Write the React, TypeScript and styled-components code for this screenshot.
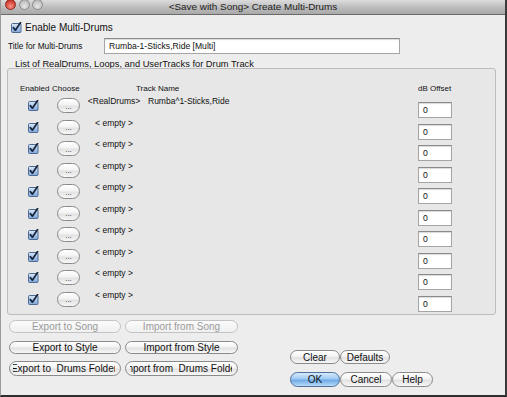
import React from "react";
import styled, { createGlobalStyle, css } from "styled-components";

const GlobalStyle = createGlobalStyle`
  html, body {
    margin: 0;
    padding: 0;
    background: #ececec;
  }
  body {
    font-family: "Liberation Sans", Arial, sans-serif;
    color: #111;
  }
`;

const Window = styled.div`
  width: 507px;
  height: 397px;
  box-sizing: border-box;
  border-left: 1px solid #9a9a9a;
  border-right: 2px solid #3a3a3a;
  border-bottom: 2px solid #2e2e2e;
  background: #ededed;
  display: flex;
  flex-direction: column;
  overflow: hidden;
`;

const TitleBar = styled.div`
  height: 14px;
  flex-shrink: 0;
  display: grid;
  grid-template-columns: 60px 1fr 60px;
  align-items: center;
  background: linear-gradient(#dcdcdc, #b9b9b9 60%, #a9a9a9);
  border-bottom: 1px solid #6a6a6a;
  overflow: hidden;
`;

const Lights = styled.div`
  display: flex;
  gap: 2.5px;
  padding-left: 4px;
  margin-top: -6px;
`;

const Light = styled.div<{ $red?: boolean }>`
  width: 11px;
  height: 11px;
  border-radius: 50%;
  box-sizing: border-box;
  border: 1px solid ${(p) => (p.$red ? "#8d2a22" : "#8c8c8c")};
  background: ${(p) =>
    p.$red
      ? "radial-gradient(circle at 50% 70%, #f7948a, #d8473a 60%, #a72a1d)"
      : "radial-gradient(circle at 50% 70%, #e6e6e6, #c4c4c4 60%, #a3a3a3)"};
`;

const Title = styled.div`
  text-align: center;
  font-size: 9.9px;
  color: #1a1a1a;
  line-height: 14px;
`;

const Body = styled.div`
  flex: 1;
  display: flex;
  flex-direction: column;
`;

const EnableRow = styled.label`
  display: flex;
  align-items: center;
  gap: 3px;
  padding: 6px 0 0 10px;
  height: 12px;
  font-size: 10px;
`;

const TitleRow = styled.div`
  display: flex;
  align-items: center;
  margin-top: 5px;
  padding-left: 7px;
  height: 16px;
`;

const SmallLabel = styled.span`
  font-size: 8.3px;
  width: 96px;
`;

const TextInput = styled.div<{ $w: number }>`
  width: ${(p) => p.$w}px;
  height: 16px;
  box-sizing: border-box;
  background: #fff;
  border: 1px solid #a5a5a5;
  border-top-color: #8a8a8a;
  box-shadow: inset 0 1px 1px rgba(0, 0, 0, 0.15);
  font-size: 8.6px;
  line-height: 14px;
  padding-left: 4px;
  white-space: nowrap;
  overflow: hidden;
`;

const SectionLabel = styled.div`
  font-size: 9.3px;
  padding: 4px 0 0 14px;
  height: 12px;
  line-height: 12px;
`;

const Group = styled.div`
  margin: -2px 9px 0 6px;
  height: 247px;
  box-sizing: border-box;
  border: 1px solid #bcbcbc;
  border-radius: 3px;
  background: #e7e7e7;
  padding: 12px 0 0 12px;
`;

const Grid = styled.div`
  display: grid;
  grid-template-columns: 27px 28px 58px 265px 34px;
  column-gap: 5px;
  grid-template-rows: 14px;
  grid-auto-rows: 21.5px;
  align-items: center;
`;

const HeadCell = styled.div<{ $indent?: number; $span?: boolean }>`
  font-size: 8px;
  white-space: nowrap;
  padding-left: ${(p) => p.$indent ?? 0}px;
  ${(p) =>
    p.$span &&
    css`
      grid-column: span 2;
    `}
`;

const Centered = styled.div`
  display: flex;
  justify-content: center;
`;

const RightCell = styled.div`
  display: flex;
  justify-content: flex-end;
`;

const SourceLabel = styled.div`
  font-size: 8.5px;
  text-align: center;
  align-self: start;
  padding-top: 1px;
  white-space: nowrap;
`;

const TrackName = styled.div`
  font-size: 8.5px;
  align-self: start;
  padding-top: 1px;
  white-space: nowrap;
`;

const OffsetCell = styled.div`
  align-self: start;
  padding-top: 7px;
`;

const Pill = styled.div<{ $w: number; $h?: number; $disabled?: boolean; $primary?: boolean }>`
  width: ${(p) => p.$w}px;
  height: ${(p) => p.$h ?? 14}px;
  box-sizing: border-box;
  border-radius: 8px;
  border: 1px solid ${(p) => (p.$disabled ? "#c3c3c3" : p.$primary ? "#4f6f9c" : "#8a8a8a")};
  background: ${(p) =>
    p.$primary
      ? "linear-gradient(#d6eafc, #9fcaf3 45%, #6fa9e6 55%, #b8dcfa)"
      : p.$disabled
      ? "linear-gradient(#fbfbfb, #f0f0f0)"
      : "linear-gradient(#ffffff, #f3f3f3 45%, #e2e2e2 55%, #f7f7f7)"};
  color: ${(p) => (p.$disabled ? "#9b9b9b" : "#111")};
  font-size: 10px;
  display: flex;
  align-items: center;
  justify-content: center;
  white-space: nowrap;
  overflow: hidden;
  flex-shrink: 0;
`;

const PillText = styled.span<{ $clip: number }>`
  display: flex;
  justify-content: center;
  width: ${(p) => p.$clip}px;
  overflow: hidden;
  margin-right: 2px;
`;

const Dots = styled.span`
  font-size: 8px;
  line-height: 8px;
  color: #333;
  margin-top: 2px;
`;

const Bottom = styled.div`
  display: flex;
  padding: 5px 0 0 8px;
`;

const LeftButtons = styled.div`
  display: grid;
  grid-template-columns: 112px 113px;
  grid-auto-rows: 13px;
  column-gap: 4px;
  row-gap: 7.5px;
`;

const RightButtons = styled.div`
  display: flex;
  flex-direction: column;
  gap: 8px;
  margin: 30px 0 0 52px;
`;

const ButtonRow = styled.div`
  display: flex;
`;

const BoxWrap = styled.span`
  width: 11px;
  height: 11px;
  display: inline-flex;
`;

function CheckBox() {
  return (
    <BoxWrap>
      <svg width="11" height="11" viewBox="0 0 11 11">
        <defs>
          <linearGradient id="cb" x1="0" y1="0" x2="0" y2="1">
            <stop offset="0" stopColor="#d9e7f7" />
            <stop offset="0.5" stopColor="#a9c6ea" />
            <stop offset="1" stopColor="#7ea6d8" />
          </linearGradient>
        </defs>
        <rect x="0.5" y="1.5" width="9.5" height="9" rx="1" fill="url(#cb)" stroke="#4e6a93" />
        <path d="M2.3 5.6 L4.4 8.2 L9.6 0.6" fill="none" stroke="#16233a" strokeWidth="1.7" strokeLinecap="round" strokeLinejoin="round" />
      </svg>
    </BoxWrap>
  );
}

const rows = [
  { source: "<RealDrums>", name: "Rumba^1-Sticks,Ride" },
  ...Array.from({ length: 9 }, () => ({ source: "< empty >", name: "" })),
];

export default function App() {
  return (
    <>
      <GlobalStyle />
      <Window>
        <TitleBar>
          <Lights>
            <Light $red />
            <Light />
            <Light />
          </Lights>
          <Title>&lt;Save with Song&gt; Create Multi-Drums</Title>
          <div />
        </TitleBar>
        <Body>
          <EnableRow>
            <CheckBox />
            Enable Multi-Drums
          </EnableRow>
          <TitleRow>
            <SmallLabel>Title for Multi-Drums</SmallLabel>
            <TextInput $w={296}>Rumba-1-Sticks,Ride [Multi]</TextInput>
          </TitleRow>
          <SectionLabel>List of RealDrums, Loops, and UserTracks for Drum Track</SectionLabel>
          <Group>
            <Grid>
              <HeadCell>Enabled</HeadCell>
              <HeadCell>Choose</HeadCell>
              <HeadCell $span $indent={51}>Track Name</HeadCell>
              <HeadCell>dB Offset</HeadCell>
              {rows.map((r, i) => (
                <React.Fragment key={i}>
                  <Centered>
                    <CheckBox />
                  </Centered>
                  <RightCell>
                    <Pill $w={23} $h={15}>
                      <Dots>...</Dots>
                    </Pill>
                  </RightCell>
                  <SourceLabel>{r.source}</SourceLabel>
                  <TrackName>{r.name}</TrackName>
                  <OffsetCell>
                    <TextInput $w={34}>0</TextInput>
                  </OffsetCell>
                </React.Fragment>
              ))}
            </Grid>
          </Group>
          <Bottom>
            <LeftButtons>
              <Pill $w={112} $h={13} $disabled>Export to Song</Pill>
              <Pill $w={113} $h={13} $disabled>Import from Song</Pill>
              <Pill $w={112} $h={13}>Export to Style</Pill>
              <Pill $w={113} $h={13}>Import from Style</Pill>
              <Pill $w={112} $h={15}>
                <PillText $clip={102}>Export to&nbsp; Drums Folder</PillText>
              </Pill>
              <Pill $w={113} $h={15}>
                <PillText $clip={102}>Import from&nbsp; Drums Folder</PillText>
              </Pill>
            </LeftButtons>
            <RightButtons>
              <ButtonRow>
                <Pill $w={50}>Clear</Pill>
                <Pill $w={50}>Defaults</Pill>
              </ButtonRow>
              <ButtonRow>
                <Pill $w={50} $h={15} $primary>OK</Pill>
                <Pill $w={52} $h={15}>Cancel</Pill>
                <Pill $w={41} $h={15}>Help</Pill>
              </ButtonRow>
            </RightButtons>
          </Bottom>
        </Body>
      </Window>
    </>
  );
}
